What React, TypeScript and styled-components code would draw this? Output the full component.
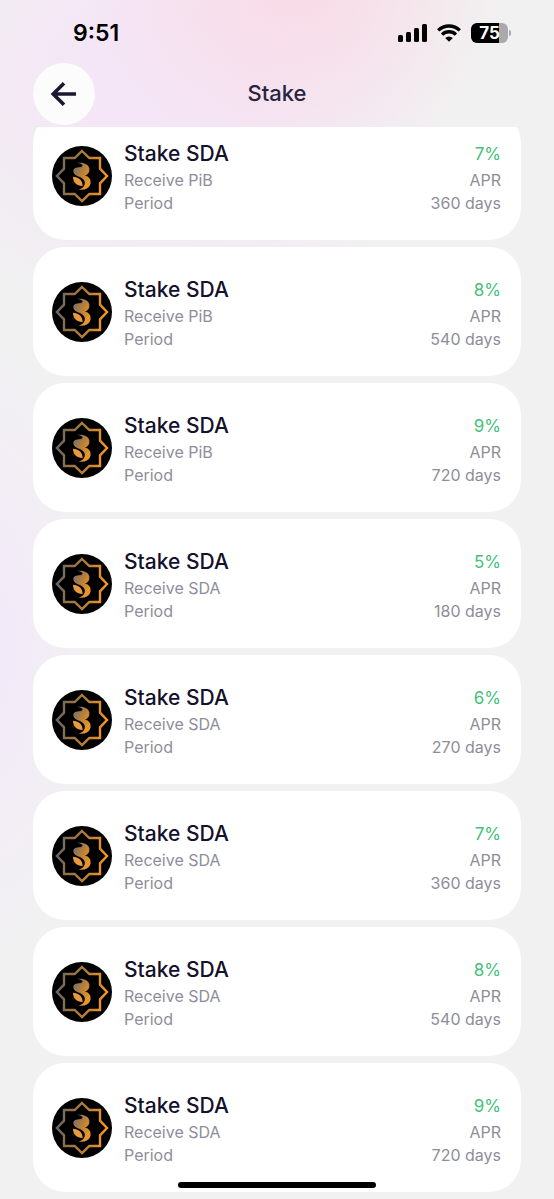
import React from "react";
import styled, { createGlobalStyle } from "styled-components";

const font = 'Inter, "Liberation Sans", sans-serif';

const GlobalStyle = createGlobalStyle`
  * { box-sizing: border-box; }
  html, body, #root { height: 100%; }
  body { margin: 0; font-family: ${font}; color: #14122b; background: #f1f1f2; }
`;

const Screen = styled.div`
  height: 100vh;
  display: flex;
  flex-direction: column;
  overflow: hidden;
  background:
    radial-gradient(ellipse 210px 190px at 54% -2%, #f9dae5 0, rgba(249, 218, 229, 0) 100%),
    radial-gradient(ellipse 290px 240px at 30% 7%, #f4e6f6 30%, rgba(244, 230, 246, 0) 100%),
    radial-gradient(ellipse 90px 320px at 0% 54%, #f3eaf9 10%, rgba(243, 234, 249, 0) 100%),
    #f1f1f1;
`;

const StatusBar = styled.div`
  flex: none;
  height: 63px;
  padding: 3px 43px 0 73px;
  display: flex;
  align-items: center;
  justify-content: space-between;
  color: #000;
`;

const Time = styled.time`
  font-size: 23px;
  font-weight: 600;
  line-height: 28px;
`;

const Indicators = styled.div`
  display: flex;
  align-items: center;
  gap: 10px;
`;

const Battery = styled.div`
  display: flex;
  align-items: center;
  gap: 1px;
  &::after {
    content: "";
    width: 2px;
    height: 6px;
    border-radius: 0 2px 2px 0;
    background: #aaa8aa;
  }
`;

const BatteryLevel = styled.span`
  width: 37px;
  height: 20px;
  border-radius: 6px;
  background: linear-gradient(90deg, #000 75%, #aaa8aa 75%);
  color: #fff;
  font-size: 17px;
  font-weight: 700;
  line-height: 20px;
  text-align: center;
`;

const Header = styled.header`
  flex: none;
  height: 64px;
  padding: 0 33px;
  display: grid;
  grid-template-columns: 62px 1fr 62px;
  align-items: start;
`;

const BackButton = styled.button`
  width: 62px;
  height: 62px;
  padding: 0;
  border: 0;
  border-radius: 50%;
  background: #fcfcfd;
  color: #1c1833;
  display: flex;
  align-items: center;
  justify-content: center;
`;

const Heading = styled.h1`
  margin: 0;
  font-size: 22px;
  font-weight: 500;
  line-height: 60px;
  text-align: center;
  color: #29243d;
`;

const Scroller = styled.main`
  flex: 1;
  min-height: 0;
  overflow: hidden;
`;

const PlanList = styled.ul`
  margin: -16px 33px 0;
  padding: 0;
  list-style: none;
  display: flex;
  flex-direction: column;
  gap: 7px;
`;

const Card = styled.li`
  min-height: 129px;
  padding: 0 20px 0 19px;
  border-radius: 32px;
  background: #fff;
  display: flex;
  align-items: center;
  gap: 12px;
`;

const Details = styled.div<{ $end?: boolean }>`
  padding-top: 3px;
  display: flex;
  flex-direction: column;
  text-align: ${(p) => (p.$end ? "right" : "left")};
  margin-left: ${(p) => (p.$end ? "auto" : "0")};
`;

const PlanName = styled.h2`
  margin: 0;
  font-size: 21px;
  font-weight: 500;
  line-height: 30px;
`;

const Rate = styled.span`
  font-size: 17px;
  line-height: 30px;
  color: #45c07b;
`;

const Note = styled.span`
  font-size: 16px;
  line-height: 23px;
  color: #8f8d99;
`;

const HomeIndicator = styled.div`
  position: fixed;
  bottom: 11px;
  left: 50%;
  width: 198px;
  height: 6px;
  border-radius: 3px;
  background: #000;
  transform: translateX(-50%);
`;

const Signal = () => (
  <svg width="29" height="18" viewBox="0 0 29 18" aria-label="Signal">
    <rect x="0" y="11" width="5" height="7" rx="1.5" />
    <rect x="8" y="8" width="5" height="10" rx="1.5" />
    <rect x="16" y="4" width="5" height="14" rx="1.5" />
    <rect x="24" y="0" width="5" height="18" rx="1.5" />
  </svg>
);

const Wifi = () => (
  <svg width="24" height="18" viewBox="0 0 24 18" aria-label="Wi-Fi" fill="none" stroke="#000" strokeWidth="3.3">
    <path d="M1.2 6.4A15.4 15.4 0 0 1 22.8 6.4" />
    <path d="M5.1 10.6A9.8 9.8 0 0 1 18.9 10.6" />
    <path d="M8.2 14A5.4 5.4 0 0 1 15.8 14L12 17.8Z" fill="#000" stroke="none" />
  </svg>
);

const BackArrow = () => (
  <svg width="28" height="26" viewBox="0 0 28 26" fill="none" stroke="currentColor" strokeWidth="3.6">
    <path d="M26 13H3.5M14 2.2L3.2 13L14 23.8" />
  </svg>
);

const CoinLogo = () => (
  <svg width="60" height="60" viewBox="0 0 60 60" aria-hidden="true">
    <defs>
      <linearGradient id="gold" gradientUnits="userSpaceOnUse" x1="4" y1="28" x2="56" y2="34">
        <stop offset="0" stopColor="#6b6663" />
        <stop offset="0.5" stopColor="#b37c38" />
        <stop offset="1" stopColor="#f69a25" />
      </linearGradient>
      <linearGradient id="mark" gradientUnits="userSpaceOnUse" x1="21" y1="23" x2="38" y2="33">
        <stop offset="0" stopColor="#77706b" />
        <stop offset="0.5" stopColor="#b98038" />
        <stop offset="1" stopColor="#e8942d" />
      </linearGradient>
    </defs>
    <circle cx="30" cy="30" r="30" />
    <path
      d="M30 5L37.3 12H48V22.7L55 30L48 37.3V48H37.3L30 55L22.7 48H12V37.3L5 30L12 22.7V12H22.7Z"
      fill="none"
      stroke="url(#gold)"
      strokeWidth="2.4"
    />
    <path
      d="M25.5 17C32 16.2 37 18.6 37.4 23.2C37.6 26.4 35.8 28.8 33 29.6C37 30.6 39 33.6 38.6 37C38 41.8 33.4 44.6 26.6 43.4C30.8 42.6 32.8 40 32.8 36.8C32.8 33.2 29.4 31.6 25.8 30.2C22.2 28.8 20.8 26.6 21.4 24C22.2 21.4 25.8 21.6 29 21C32 20.2 30.6 17.6 25.5 17Z"
      fill="url(#mark)"
    />
    <path d="M21 30.8C26.4 31 30.6 34 30.6 40C25 40.2 21 36.8 21 30.8Z" fill="#e89a3d" />
  </svg>
);

const plans = [
  { receive: "PiB", rate: 7, days: 360 },
  { receive: "PiB", rate: 8, days: 540 },
  { receive: "PiB", rate: 9, days: 720 },
  { receive: "SDA", rate: 5, days: 180 },
  { receive: "SDA", rate: 6, days: 270 },
  { receive: "SDA", rate: 7, days: 360 },
  { receive: "SDA", rate: 8, days: 540 },
  { receive: "SDA", rate: 9, days: 720 },
];

export default function App() {
  return (
    <Screen>
      <GlobalStyle />
      <StatusBar>
        <Time>9:51</Time>
        <Indicators>
          <Signal />
          <Wifi />
          <Battery>
            <BatteryLevel>75</BatteryLevel>
          </Battery>
        </Indicators>
      </StatusBar>
      <Header>
        <BackButton aria-label="Back">
          <BackArrow />
        </BackButton>
        <Heading>Stake</Heading>
      </Header>
      <Scroller>
        <PlanList>
          {plans.map((plan) => (
            <Card key={`${plan.receive}-${plan.days}`}>
              <CoinLogo />
              <Details>
                <PlanName>Stake SDA</PlanName>
                <Note>Receive {plan.receive}</Note>
                <Note>Period</Note>
              </Details>
              <Details $end>
                <Rate>{plan.rate}%</Rate>
                <Note>APR</Note>
                <Note>{plan.days} days</Note>
              </Details>
            </Card>
          ))}
        </PlanList>
      </Scroller>
      <HomeIndicator />
    </Screen>
  );
}
